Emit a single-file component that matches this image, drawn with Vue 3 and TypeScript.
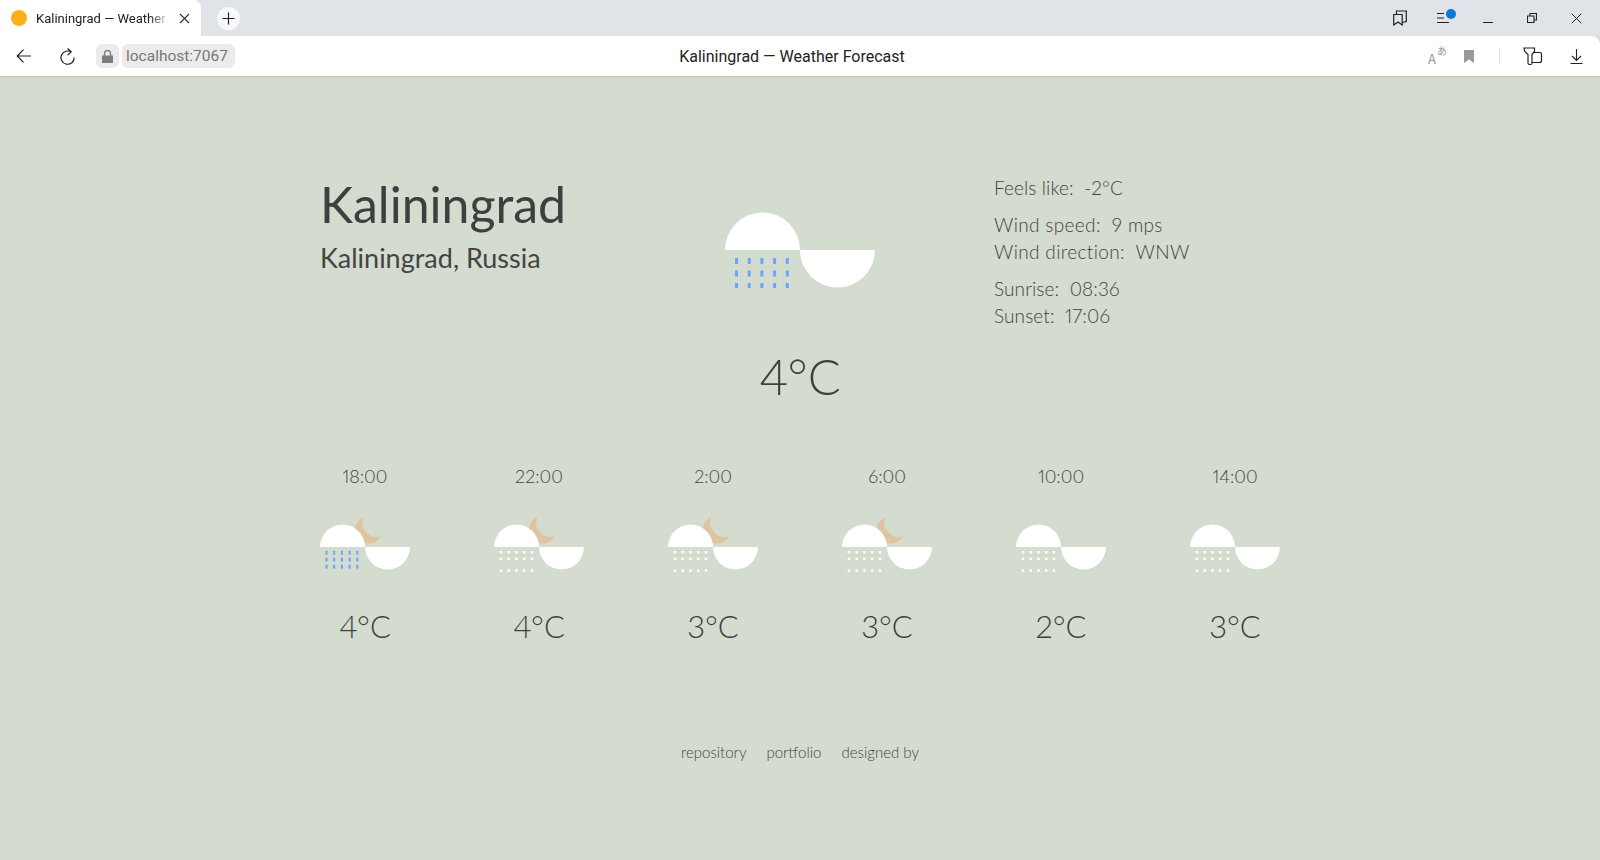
<template>
  <div class="window">
    <div class="tabstrip">
      <div class="tab">
        <span class="favicon"></span>
        <span class="tab-title">Kaliningrad — Weather Forecast</span>
        <svg class="tab-close" width="11" height="11" viewBox="0 0 11 11"><path d="M1 1l9 9M10 1l-9 9" stroke="#333" stroke-width="1.1" fill="none" /></svg>
      </div>
      <div class="newtab">
        <svg width="13" height="13" viewBox="0 0 13 13"><path d="M6.500 .5v12M.5 6.500h12" stroke="#222" stroke-width="1.2" fill="none" /></svg>
      </div>
      <div class="strip-right">
        <span class="cell">
          <svg width="14" height="16" viewBox="0 0 14 16" fill="none" stroke="#222" stroke-width="1.200"><path d="M.7 4.500h8.500v10.500l-4.250-3-4.250 3zM3.500 4.500V1h9.800v10.500l-4 1" /></svg>
        </span>
        <span class="cell menu-ic">
          <svg width="14" height="12" viewBox="0 0 14 12" fill="none" stroke="#222" stroke-width="1"><path d="M0 1.500h7M0 6h7M0 10.500h12" /></svg>
          <span class="dot"></span>
        </span>
        <span class="cell">
          <svg class="min" width="10" height="10" viewBox="0 0 10 10"><path d="M0 9.500h10" stroke="#222" stroke-width="1" fill="none" /></svg>
        </span>
        <span class="cell">
          <svg width="10" height="10" viewBox="0 0 10 10" fill="none" stroke="#222" stroke-width="1.100"><path d="M.5 3h6.500v6.500H.5zM3 3V.5h6.500V7H7" /></svg>
        </span>
        <span class="cell">
          <svg width="11" height="11" viewBox="0 0 11 11"><path d="M.7 .7l9.600 9.600M10.300 .7l-9.600 9.600" stroke="#222" stroke-width="1" fill="none" /></svg>
        </span>
      </div>
    </div>
    <div class="addressbar">
      <svg width="15" height="14" viewBox="0 0 15 14" class="back" fill="none" stroke="#222" stroke-width="1.200"><path d="M15 7H1.500M7.500 .7L1.200 7l6.300 6.300" /></svg>
      <svg width="15" height="17" viewBox="0 0 15 17" class="reload" fill="none" stroke="#222" stroke-width="1.200"><path d="M11.500 4.300A6.600 6.600 0 1 0 14.200 9.500M7.600 .5l3.600 3.300-3.600 3.300" /></svg>
      <span class="lock">
        <svg width="11" height="13" viewBox="0 0 11 13"><path d="M0 5.500h11V13H0z" fill="#7d7d7d" /><path d="M2.500 6V3.500a3 3 0 0 1 6 0V6" fill="none" stroke="#7d7d7d" stroke-width="1.400" /></svg>
      </span>
      <span class="url">localhost:7067</span>
      <span class="page-title">Kaliningrad — Weather Forecast</span>
      <div class="bar-right">
        <span class="translate"><i>A</i><b>あ</b></span>
        <svg class="bookmark" width="10" height="13" viewBox="0 0 10 13"><path d="M0 0h10v13L5 9.500 0 13z" fill="#9a9a9a" /></svg>
        <span class="sep"></span>
        <svg class="wallet" width="20" height="20" viewBox="0 0 20 20" fill="none" stroke="#222" stroke-width="1.200"><path d="M1 2h10.500v3.500L9 8.500V17a1.500 1.500 0 0 1-1.500 1.500h-1A1.500 1.500 0 0 1 5 17V8.500L1.500 5zM11 6.500h6A1.500 1.500 0 0 1 18.500 8v6.500a2 2 0 0 1-2 2H9" /></svg>
        <svg class="download" width="13" height="15" viewBox="0 0 13 15" fill="none" stroke="#222" stroke-width="1.100"><path d="M6.500 0v11M2 7l4.500 4.500L11 7M.5 14.500h12" /></svg>
      </div>
    </div>

    <main class="page">
      <section class="current">
        <div class="place">
          <h1>{{ city }}</h1>
          <h2>{{ region }}</h2>
        </div>
        <div class="now">
          <svg class="icon-big" width="150" height="76" viewBox="0 0 150 76">
            <path d="M0 38a37.500 37.500 0 0 1 75 0z" fill="#fff" />
            <path d="M75 38h75a37.500 37.500 0 0 1-75 0z" fill="#fff" />
            <template v-for="y in 3" :key="y">
              <rect v-for="x in 5" :key="x" :x="10 + (x - 1) * 12.700" :y="46 + (y - 1) * 12.500" width="3" height="6" fill="#66a6ff" />
            </template>
          </svg>
          <div class="temp">4°C</div>
        </div>
        <div class="details">
          <p>Feels like: &nbsp;-2°C</p>
          <div class="group wind">
            <p>Wind speed: &nbsp;9 mps</p>
            <p>Wind direction: &nbsp;WNW</p>
          </div>
          <div class="group">
            <p>Sunrise: &nbsp;08:36</p>
            <p>Sunset: &nbsp;17:06</p>
          </div>
        </div>
      </section>

      <section class="forecast">
        <div v-for="f in forecast" :key="f.time" class="slot">
          <div class="time">{{ f.time }}</div>
          <svg class="icon-small" width="90" height="60" viewBox="0 0 90 60">
            <path v-if="f.moon" d="M43.500 1A13.800 13.800 0 1 0 61 20A14 14 0 0 1 43.500 1z" fill="#e0c4a0" />
            <path d="M0 31a22.500 22.500 0 0 1 45 0z" fill="#fff" />
            <path d="M45 31h45a22.500 22.500 0 0 1-45 0z" fill="#fff" />
            <template v-if="f.rain">
              <template v-for="y in 3" :key="y">
                <rect v-for="x in 5" :key="x" :x="5.500 + (x - 1) * 7.700" :y="34.700 + (y - 1) * 7" width="2" height="4" fill="#66a6ff" />
              </template>
            </template>
            <template v-else>
              <template v-for="y in [35, 41.7, 53.3]" :key="y">
                <rect v-for="x in 5" :key="x" :x="5.700 + (x - 1) * 7.750" :y="y" width="2.500" height="2.500" fill="#fff" />
              </template>
            </template>
          </svg>
          <div class="slot-temp">{{ f.temp }}°C</div>
        </div>
      </section>

      <footer class="links">
        <a>repository</a>
        <a>portfolio</a>
        <a>designed by</a>
      </footer>
    </main>
  </div>
</template>

<script setup lang="ts">
const city = 'Kaliningrad'
const region = 'Kaliningrad, Russia'

const forecast = [
  { time: '18:00', temp: 4, moon: true, rain: true },
  { time: '22:00', temp: 4, moon: true, rain: false },
  { time: '2:00', temp: 3, moon: true, rain: false },
  { time: '6:00', temp: 3, moon: true, rain: false },
  { time: '10:00', temp: 2, moon: false, rain: false },
  { time: '14:00', temp: 3, moon: false, rain: false }
]
</script>

<style>
html,
body {
  margin: 0;
  overflow: hidden;
}
</style>

<style scoped>
.window {
  width: 1600px;
  height: 860px;
  display: flex;
  flex-direction: column;
  background: #d4dbcf;
  font-family: "Lato", "Liberation Sans", sans-serif;
  font-variant-numeric: proportional-nums;
  color: #3f3f3f;
}

/* browser chrome */
.tabstrip {
  height: 36px;
  background: #e0e3e8;
  display: flex;
  align-items: center;
  flex: none;
}
.tab {
  width: 201px;
  height: 36px;
  background: #fff;
  border-radius: 0 8px 0 0;
  display: flex;
  align-items: center;
  padding: 0 11px 0 11px;
  box-sizing: border-box;
  gap: 9px;
}
.favicon {
  width: 16px;
  height: 16px;
  border-radius: 50%;
  background: #fdae1a;
  flex: none;
}
.tab-title {
  flex: 1;
  font: 13px "Roboto", "Liberation Sans", sans-serif;
  color: #222;
  white-space: nowrap;
  overflow: hidden;
  -webkit-mask-image: linear-gradient(to right, #000 85%, transparent);
  mask-image: linear-gradient(to right, #000 85%, transparent);
}
.tab-close {
  flex: none;
}
.newtab {
  width: 23px;
  height: 23px;
  border-radius: 50%;
  background: #f7f8fa;
  margin-left: 16px;
  display: flex;
  align-items: center;
  justify-content: center;
}
.strip-right {
  margin-left: auto;
  display: flex;
  align-items: center;
  padding-right: 2px;
}
.cell {
  width: 44px;
  height: 36px;
  display: flex;
  align-items: center;
  justify-content: center;
}
.menu-ic {
  position: relative;
}
.dot {
  position: absolute;
  left: 24px;
  top: 9px;
  width: 10px;
  height: 10px;
  border-radius: 50%;
  background: #0a7ad8;
}
.addressbar {
  height: 40px;
  flex: none;
  background: #fff;
  border-radius: 0 8px 0 0;
  display: flex;
  align-items: center;
  position: relative;
  box-shadow: 0 1px 2px rgba(0, 0, 0, 0.1);
  padding: 0 17px 0 16px;
  z-index: 1;
}
.back {
  margin-right: 29px;
}
.reload {
  margin-right: 21px;
}
.lock {
  width: 23px;
  height: 24px;
  border-radius: 6px;
  background: #ebebeb;
  display: flex;
  align-items: center;
  justify-content: center;
  margin-right: 3px;
}
.url {
  height: 24px;
  padding: 0 7px 0 4px;
  border-radius: 6px;
  background: #ebebeb;
  color: #777;
  font: 15.500px/25px "Roboto", "Liberation Sans", sans-serif;
}
.page-title {
  position: absolute;
  left: 0;
  right: 16px;
  text-align: center;
  font: 16px "Roboto", "Liberation Sans", sans-serif;
  color: #222;
  pointer-events: none;
}
.bar-right {
  margin-left: auto;
  display: flex;
  align-items: center;
}
.translate {
  position: relative;
  width: 20px;
  height: 18px;
  color: #9a9a9a;
  font: 12px "Noto Sans CJK JP", sans-serif;
}
.translate i {
  position: absolute;
  left: 1px;
  bottom: -3px;
  font-style: normal;
  font-size: 13px;
}
.translate b {
  position: absolute;
  right: 0;
  top: -4px;
  font-weight: 400;
  font-size: 10px;
}
.bookmark {
  margin-left: 17px;
}
.sep {
  width: 1px;
  height: 16px;
  background: #e2e2e2;
  margin-left: 25px;
}
.wallet {
  margin-left: 23px;
}
.download {
  margin-left: 27px;
}

/* weather page */
.page {
  flex: 1;
  display: flex;
  flex-direction: column;
  padding: 0 320px;
}
.current {
  display: grid;
  grid-template-columns: 322px 316px 1fr;
  padding-top: 96px;
}
h1 {
  margin: 1px 0 0;
  font-size: 50px;
  line-height: 62px;
  font-weight: 400;
  color: #3f3f3f;
}
h2 {
  margin: 6px 0 0;
  font-size: 27px;
  line-height: 34px;
  font-weight: 400;
  color: #444;
}
.now {
  display: flex;
  flex-direction: column;
  align-items: center;
  padding-top: 40px;
}
.temp {
  margin-top: 56px;
  font-size: 49px;
  line-height: 64px;
  font-weight: 300;
}
.details {
  padding-left: 36px;
  padding-top: 2px;
  font-size: 19px;
  line-height: 27px;
  font-weight: 300;
  letter-spacing: 0.1px;
  color: #444;
}
.details p {
  margin: 0;
}
.group {
  margin-top: 10px;
}
.wind {
  letter-spacing: 0.35px;
}
.forecast {
  display: flex;
  justify-content: space-between;
  margin-top: 56px;
}
.slot {
  width: 90px;
  display: flex;
  flex-direction: column;
}
.time {
  text-align: center;
  font-size: 18px;
  line-height: 24px;
  font-weight: 300;
  color: #444;
}
.icon-small {
  margin-top: 28px;
}
.slot-temp {
  margin-top: 30px;
  text-align: center;
  font-size: 31px;
  line-height: 40px;
  font-weight: 300;
  color: #3f3f3f;
}
.links {
  display: flex;
  justify-content: center;
  gap: 20px;
  margin-top: 96px;
  font-size: 15px;
  line-height: 20px;
  font-weight: 300;
  color: #444;
}
</style>
